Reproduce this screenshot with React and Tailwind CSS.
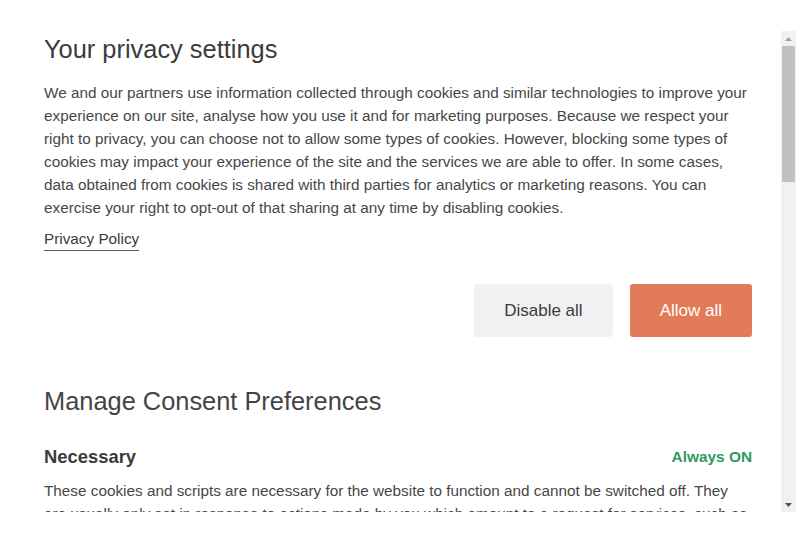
import React from 'react';

// ===== FAKE SCROLLBAR =====
function Scrollbar() {
  return (
    <div className="flex w-[15px] shrink-0 flex-col bg-[#f1f1f1]">
      <div className="flex h-[15px] items-center justify-center">
        <svg width="7" height="4" viewBox="0 0 7 4">
          <path d="M0 4 L3.5 0 L7 4 Z" fill="#a3a3a3" />
        </svg>
      </div>
      <div className="flex flex-1 flex-col">
        <div className="h-[136px] mx-[1px] bg-[#c1c1c1]" />
      </div>
      <div className="flex h-[15px] items-center justify-center">
        <svg width="7" height="4" viewBox="0 0 7 4">
          <path d="M0 0 L3.5 4 L7 0 Z" fill="#505050" />
        </svg>
      </div>
    </div>
  );
}

export default function App() {
  return (
    <div
      className="h-[544px] w-[807px] bg-white pt-[31px]"
      style={{ fontFamily: '"Liberation Sans", Arial, sans-serif' }}
    >
      <div className="flex h-[481px] w-[796px]">
        {/* Content */}
        <div className="flex-1 overflow-hidden pl-[44px] pr-[29px] pt-[4px]">
          <h1 className="text-[25.4px] leading-[29px] text-[#3b3b3b] mb-[17px]">
            Your privacy settings
          </h1>
          <p className="text-[15.3px] leading-[23px] text-[#474747]">
            We and our partners use information collected through cookies and similar technologies to improve your
            experience on our site, analyse how you use it and for marketing purposes. Because we respect your
            right to privacy, you can choose not to allow some types of cookies. However, blocking some types of
            cookies may impact your experience of the site and the services we are able to offer. In some cases,
            data obtained from cookies is shared with third parties for analytics or marketing reasons. You can
            exercise your right to opt-out of that sharing at any time by disabling cookies.
          </p>
          <div className="mt-[8px]">
            <a className="inline-block border-b border-[#5a5a5a] text-[15.3px] leading-[23px] text-[#3b3b3b]">
              Privacy Policy
            </a>
          </div>

          <div className="mt-[33px] flex justify-end gap-[17px]">
            <button className="h-[53px] rounded-[3px] bg-[#f1f0f3] px-[30px] text-[17px] text-[#3b3b3b]">
              Disable all
            </button>
            <button className="h-[53px] rounded-[3px] bg-[#e27b58] px-[30px] text-[17px] text-white">
              Allow all
            </button>
          </div>

          <h2 className="mt-[49px] text-[25.4px] leading-[30px] text-[#444444]">
            Manage Consent Preferences
          </h2>

          <div className="mt-[29px] flex items-center justify-between">
            <h3 className="text-[18.4px] leading-[24px] font-bold text-[#3b3b3b]">Necessary</h3>
            <span className="text-[15.4px] font-bold text-[#2f9a5e]">Always ON</span>
          </div>

          <p className="mt-[10px] text-[15.3px] leading-[23px] text-[#474747]">
            These cookies and scripts are necessary for the website to function and cannot be switched off. They
            are usually only set in response to actions made by you which amount to a request for services, such as
            setting your privacy preferences, logging in or filling in forms.
          </p>
        </div>

        <Scrollbar />
      </div>
    </div>
  );
}
